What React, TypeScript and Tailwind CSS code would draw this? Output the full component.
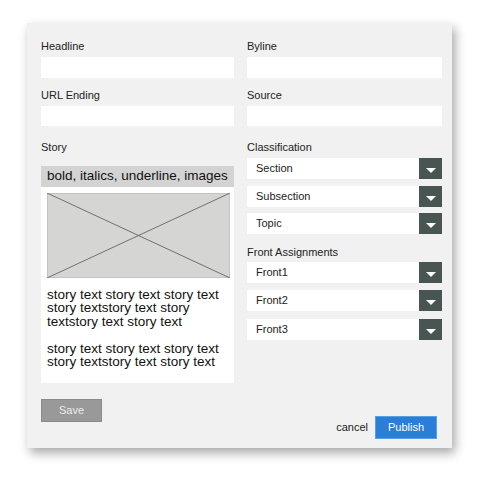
import React from "react";

const Label = ({ children, className = "" }: { children: React.ReactNode; className?: string }) => (
  <div className={`text-[11px] leading-[13px] text-[#222] ${className}`}>{children}</div>
);

const Field = ({ className = "" }: { className?: string }) => <div className={`bg-white ${className}`} />;

const Select = ({ label, className = "" }: { label: string; className?: string }) => (
  <div className={`flex h-[21px] items-center bg-white ${className}`}>
    <span className="flex-1 pl-[9px] text-[11px] text-[#222]">{label}</span>
    <div className="flex h-full w-[23px] items-center justify-center bg-[#485553]">
      <svg width="10" height="5" viewBox="0 0 10 5" className="mt-[3px]">
        <polygon points="0,0 10,0 5,5" fill="#ffffff" />
      </svg>
    </div>
  </div>
);

export default function App() {
  return (
    <div className="min-h-screen bg-white pl-[27px] pt-[23px] font-['Liberation_Sans',Arial,sans-serif]">
      <div className="flex h-[425px] w-[425px] flex-col bg-[#f1f1f1] pl-[14px] pr-[10px] pt-[17px] shadow-[3px_5px_10px_rgba(0,0,0,0.35)]">
        <div className="grid grid-cols-[193px_195px] gap-x-[13px]">
          {/* left column */}
          <div className="flex flex-col">
            <Label>Headline</Label>
            <Field className="mt-[4px] h-[21px]" />
            <Label className="mt-[11px]">URL Ending</Label>
            <Field className="mt-[4px] h-[20px]" />
            <Label className="mt-[15px]">Story</Label>
            <div className="mt-[12px] flex h-[21px] items-center bg-[#d3d3d3] pl-[6px] text-[13.5px] text-[#111]">
              bold, italics, underline, images
            </div>
            <div className="bg-white pb-[14px] pl-[6px] pr-[4px] pt-[6px]">
              <svg width="183" height="85" viewBox="0 0 183 85" className="block">
                <rect x="0.5" y="0.5" width="182" height="84" fill="#d5d6d3" stroke="#c4c4c4" />
                <line x1="0" y1="0" x2="183" y2="85" stroke="#555" strokeWidth="0.8" />
                <line x1="183" y1="0" x2="0" y2="85" stroke="#555" strokeWidth="0.8" />
              </svg>
              <div className="mt-[9.5px] text-[13.5px] leading-[13.6px] text-[#111]">
                <p>story text story text story text story textstory text story textstory text story text</p>
                <p className="mt-[13.6px]">story text story text story text story textstory text story text</p>
              </div>
            </div>
          </div>

          {/* right column */}
          <div className="flex flex-col">
            <Label>Byline</Label>
            <Field className="mt-[4px] h-[21px]" />
            <Label className="mt-[11px]">Source</Label>
            <Field className="mt-[4px] h-[20px]" />
            <Label className="mt-[15px]">Classification</Label>
            <Select label="Section" className="mt-[4px]" />
            <Select label="Subsection" className="mt-[7px]" />
            <Select label="Topic" className="mt-[6px]" />
            <Label className="mt-[12px]">Front Assignments</Label>
            <Select label="Front1" className="mt-[3px]" />
            <Select label="Front2" className="mt-[7px]" />
            <Select label="Front3" className="mt-[8px]" />
          </div>
        </div>

        <div className="mt-[16px] flex items-start justify-between pr-[5px]">
          <button className="h-[23px] w-[61px] border border-[#8a8a8a] bg-[#999999] text-[11px] text-[#ececec]">
            Save
          </button>
          <div className="mt-[17px] flex items-center gap-[7px]">
            <span className="text-[11px] text-[#222]">cancel</span>
            <button className="h-[23px] w-[62px] border border-[#5a9ee6] bg-[#2a7ed8] text-[11px] text-white">
              Publish
            </button>
          </div>
        </div>
      </div>
    </div>
  );
}
